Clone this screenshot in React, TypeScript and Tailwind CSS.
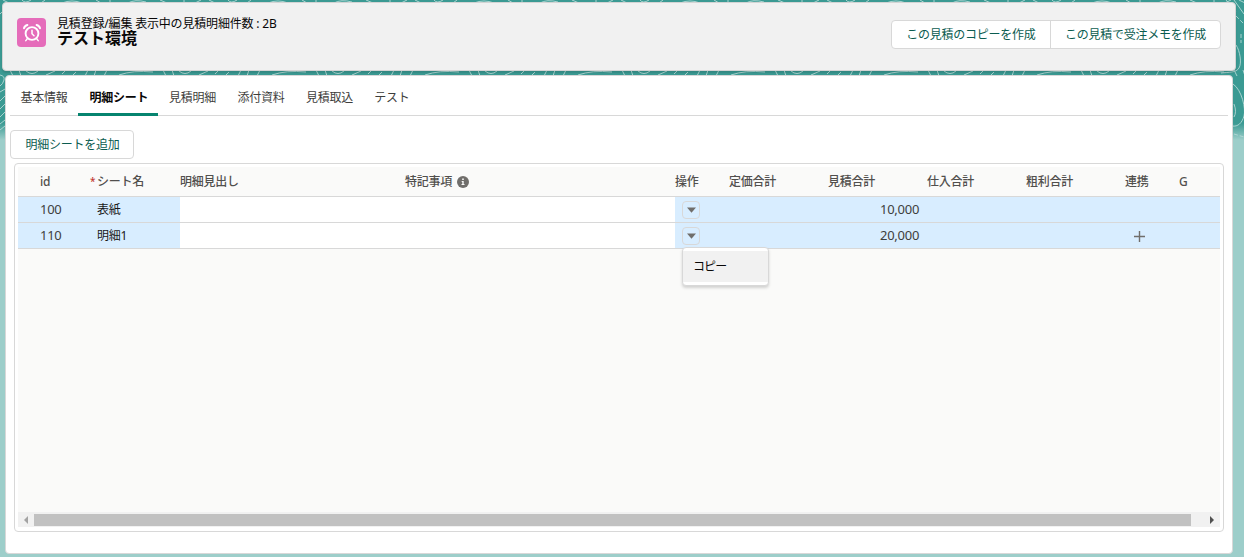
import type { ReactNode } from "react";

const tabs = [
  { label: "基本情報", width: "w-[68px]" },
  { label: "明細シート", width: "w-[80px]", active: true },
  { label: "見積明細", width: "w-[69px]" },
  { label: "添付資料", width: "w-[68px]" },
  { label: "見積取込", width: "w-[69px]" },
  { label: "テスト", width: "w-[56px]" },
];

const rows = [
  { id: "100", name: "表紙", total: "10,000", linked: false },
  { id: "110", name: "明細1", total: "20,000", linked: true },
];

const GRID = "grid grid-cols-[72px_90px_225px_270px_45px_99px_99px_99px_99px_54px_50px]";

function Contours() {
  return (
    <svg className="absolute inset-x-0 top-0 h-[140px] w-full" fill="none" stroke="#b4d9d6" strokeWidth="0.9">
      <defs>
        <linearGradient id="sky" x1="0" y1="0" x2="0" y2="1">
          <stop offset="0" stopColor="#3b9a93" />
          <stop offset="0.88" stopColor="#3b9a93" />
          <stop offset="1" stopColor="#9dceca" />
        </linearGradient>
        <pattern id="top" width="206" height="8" patternUnits="userSpaceOnUse">
          <path d="M3 0l6 3M22 0q3 4 9 0M45 0l-4 3M62 3q10-4 20 0M96 0l5 3M110 0v3M128 3q7-4 18-1M160 0l7 3M184 0v3M195 3l6-3" />
        </pattern>
        <pattern id="gap" width="153" height="6" y="70" patternUnits="userSpaceOnUse">
          <path d="M10 0l3 6M19 0l2 6M26 1q6 5 12 0M46 5l9-4M62 4l3-3M73 5l3-3M88 0l-3 6M96 0l-2 6M107 0l-3 6M119 5q14-5 34-3" />
        </pattern>
      </defs>
      <rect width="1244" height="140" fill="url(#sky)" stroke="none" />
      <rect width="1244" height="3" fill="url(#top)" stroke="none" />
      <rect y="70" width="1244" height="6" fill="url(#gap)" stroke="none" />
      <path d="M1226 0l10 12M1234 0l10 14M1236 45c4 6 6 18 3 23s-10 4-18 5M1233 84c9 6 13 25 11 32s-6 11-12 10M1234 104q3 8 0 13" />
      <path d="M1236 16l8 8M1241 34v9M1234 134l10 3" strokeDasharray="4 2" />
      <path d="M0 14l3-3M0 75q5 1 4 5t-4 6M0 92l5-3M0 101l5-5M0 109l5-5M0 117l5-5M0 124l5-4M0 130l5-4" />
    </svg>
  );
}

function HeaderCell({ children, className = "" }: { children?: ReactNode; className?: string }) {
  return <div className={`flex items-center whitespace-nowrap ${className}`}>{children}</div>;
}

export default function App() {
  return (
    <div className="relative h-[557px] w-[1244px] overflow-hidden bg-[#9dceca] font-['Noto_Sans','Noto_Sans_CJK_JP',sans-serif] text-[12px] tracking-[-0.25px] text-[#3e3e3c]">
      <Contours />
      <div className="relative flex h-full flex-col pt-[2px]">
        <header className="ml-[2px] flex h-[69px] w-[1234px] justify-between rounded-[4px] border border-[#d4d4d4] bg-[#f1f1f1] px-[14px] shadow-[0_2px_2px_rgba(0,0,0,0.12)]">
          <div className="flex pt-[15px]">
            <div className="flex size-[29px] items-center justify-center rounded-[4px] bg-[#e56cba]">
              <svg viewBox="0 0 20 20" className="size-5" fill="none" stroke="white" strokeWidth="1.9" strokeLinecap="round">
                <circle cx="10" cy="10.5" r="6.4" />
                <path d="M10 7.2v3.5l2 2M5.4 15.6l-1.6 2M14.6 15.6l1.6 2" strokeWidth="1.5" />
                <path d="M2 5.2Q2.6 2.7 5.4 2M18 5.2Q17.4 2.7 14.6 2" strokeWidth="2" />
              </svg>
            </div>
            <div className="-mt-[2px] ml-[11px] whitespace-nowrap text-[#080707]">
              <p className="h-[15px] leading-[15px] tracking-[-0.18px]">見積登録/編集 表示中の見積明細件数 : 2B</p>
              <h1 className="text-[16px] leading-[15px] font-bold tracking-normal">テスト環境</h1>
            </div>
          </div>
          <div className="mt-[17px] flex h-[29px] rounded-[4px] border border-[#d8d8d8] bg-white text-[#0b5c50]">
            <button className="w-[159px] border-r border-[#d8d8d8]">この見積のコピーを作成</button>
            <button className="w-[169px]">この見積で受注メモを作成</button>
          </div>
        </header>

        <main className="mt-[4px] ml-[5px] flex h-[479px] w-[1228px] flex-col rounded-[4px] border border-[#d8d8d8] bg-white">
          <nav className="mx-[4px] flex h-[40px] border-b border-[#d8d8d8]">
            {tabs.map((tab) => (
              <div
                key={tab.label}
                className={`flex h-[40px] shrink-0 items-center justify-center whitespace-nowrap ${tab.width} ${
                  tab.active ? "border-b-[3px] border-[#06846f] pt-[6px] pl-[2px] font-bold text-[#080707]" : "pt-[3px]"
                }`}
              >
                {tab.label}
              </div>
            ))}
          </nav>

          <button className="mt-[14px] ml-[4px] h-[29px] w-[124px] rounded-[4px] border border-[#d8d8d8] pl-px text-[#0b5c50]">
            明細シートを追加
          </button>

          <section className="mt-[4px] ml-[8px] h-[369px] w-[1210px] rounded-[4px] border border-[#d8d8d8] p-[3px]">
            <div className="flex h-[360px] flex-col bg-[#fafaf9]">
              <div className={`${GRID} h-[30px] shrink-0 border-b border-[#d8d8d8] font-medium text-[#514f4d]`}>
                <HeaderCell className="pl-[22px]">id</HeaderCell>
                <HeaderCell>
                  <span className="mr-[2px] w-[5px] text-[10px] text-[#c23934]">*</span>シート名
                </HeaderCell>
                <HeaderCell>明細見出し</HeaderCell>
                <HeaderCell>
                  特記事項
                  <svg viewBox="0 0 12 12" className="ml-[5px] size-3">
                    <circle cx="6" cy="6" r="6" fill="#706e6b" />
                    <path d="M5.2 2.5h1.6v1.4H5.2zM4.7 5h2v3h.8v1h-3V8h.8V6h-.6z" fill="#fafaf9" />
                  </svg>
                </HeaderCell>
                <HeaderCell>操作</HeaderCell>
                <HeaderCell className="pl-[9px]">定価合計</HeaderCell>
                <HeaderCell className="pl-[9px]">見積合計</HeaderCell>
                <HeaderCell className="pl-[9px]">仕入合計</HeaderCell>
                <HeaderCell className="pl-[9px]">粗利合計</HeaderCell>
                <HeaderCell className="pl-[9px]">連携</HeaderCell>
                <HeaderCell className="pl-[9px]">G</HeaderCell>
              </div>

              {rows.map((row) => (
                <div key={row.id} className={`${GRID} h-[26px] shrink-0 border-b border-[#d8d8d8] bg-[#d8edff]`}>
                  <div className="flex items-center pl-[22px] text-[13px]">{row.id}</div>
                  <div className="flex items-center pl-[7px] text-[#181818]">{row.name}</div>
                  <div className="col-span-2 bg-white" />
                  <div className="relative flex items-center pl-[7px]">
                    <button className="flex size-[18px] items-center justify-center rounded-[4px] border border-[#d8d8d8]">
                      <svg viewBox="0 0 8 6" className="h-[6px] w-[9px] fill-[#706e6b]" preserveAspectRatio="none">
                        <path d="M0 .5h8L4 5.8z" />
                      </svg>
                    </button>
                    {row.linked && (
                      <div className="absolute top-[24px] left-[7px] z-10 h-[39px] w-[87px] rounded-[4px] border border-[#d8d8d8] bg-white py-[3px] shadow-[0_2px_3px_rgba(0,0,0,0.16)]">
                        <div className="flex h-[31px] items-center bg-[#f1f1f1] pt-px pl-[10px] tracking-[-0.9px] text-[#080707]">
                          コピー
                        </div>
                      </div>
                    )}
                  </div>
                  <div />
                  <div className="flex items-center pl-[61px] text-[13px] whitespace-nowrap">{row.total}</div>
                  <div />
                  <div />
                  <div className="flex items-center pt-[2px] pl-[18px]">
                    {row.linked && (
                      <svg viewBox="0 0 11 11" className="size-[11px] stroke-[#706e6b]" strokeWidth="1.4">
                        <path d="M5.5 0v11M0 5.5h11" />
                      </svg>
                    )}
                  </div>
                  <div />
                </div>
              ))}

              <div className="mt-auto flex h-[15px] items-center bg-[#f1f1f1]">
                <svg viewBox="0 0 16 15" className="h-[15px] w-[16px] fill-[#a3a3a3]">
                  <path d="M10 4v8L6 8z" />
                </svg>
                <div className="h-[12px] w-[1157px] bg-[#c1c1c1]" />
                <svg viewBox="0 0 29 15" className="h-[15px] w-[29px] fill-[#505050]">
                  <path d="M19 4v8l4-4z" />
                </svg>
              </div>
            </div>
          </section>
        </main>
      </div>
    </div>
  );
}
